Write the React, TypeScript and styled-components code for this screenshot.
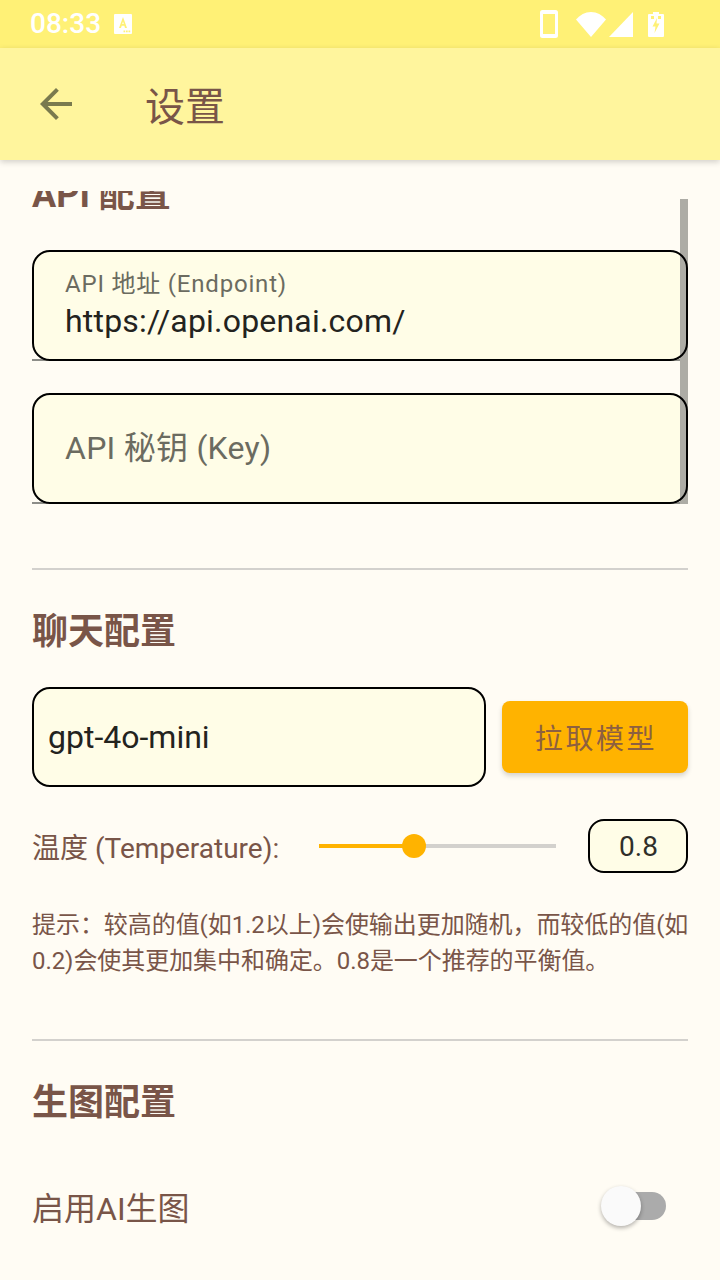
import React from "react";
import styled, { createGlobalStyle } from "styled-components";

const FONT = `Roboto, "Noto Sans CJK SC", sans-serif`;

const Global = createGlobalStyle`
  html, body { margin: 0; padding: 0; }
  body { width: 720px; height: 1280px; overflow: hidden; background: #fffcf4; font-family: ${FONT}; }
`;

const Screen = styled.div`
  width: 720px;
  height: 1280px;
  display: flex;
  flex-direction: column;
  position: relative;
  overflow: hidden;
  background: #fffcf4;
`;

const StatusBar = styled.div`
  height: 48px;
  flex: none;
  background: #fff176;
  display: flex;
  align-items: center;
  padding: 0 56px 0 30px;
  color: #fff;
`;

const Clock = styled.span`
  font-size: 28px;
  font-weight: 500;
  line-height: 48px;
  margin-right: 13px;
`;

const StatusRight = styled.div`
  margin-left: auto;
  display: flex;
  align-items: center;
`;

const StatusSlot = styled.span<{ $ml: number }>`
  display: flex;
  margin-left: ${(p) => p.$ml}px;
`;

const AppBar = styled.header`
  height: 112px;
  flex: none;
  background: #fff59d;
  display: flex;
  align-items: center;
  padding-left: 32px;
  box-shadow: 0 2px 6px rgba(0, 0, 0, 0.18);
  position: relative;
  z-index: 2;
`;

const AppTitle = styled.h1`
  margin: 7px 0 0 65px;
  font-size: 40px;
  font-weight: 400;
  color: #795548;
  line-height: 1;
`;

const Scroll = styled.main`
  flex: 1;
  margin-top: 31px;
  overflow: hidden;
  padding: 0 32px;
  position: relative;
`;

const ScrollThumb = styled.div`
  position: absolute;
  right: 32px;
  top: 8px;
  width: 8px;
  height: 305px;
  background: #adaca5;
  z-index: 1;
`;

const SectionTitle = styled.h2<{ $top: number }>`
  margin: ${(p) => p.$top}px 0 0;
  font-size: 36px;
  line-height: 48px;
  font-weight: 700;
  color: #795548;
`;

const TextField = styled.div<{ $gap: number }>`
  height: 111px;
  margin-top: ${(p) => p.$gap}px;
  box-sizing: border-box;
  position: relative;
  border-bottom: 2px solid #8d8d88;
`;

const FieldFill = styled.div`
  position: absolute;
  inset: 0 0 -2px 0;
  border-radius: 18px;
  background: #fffde7;
`;

const FieldBox = styled.div`
  position: absolute;
  inset: 0 0 -2px 0;
  box-sizing: border-box;
  border: 2px solid #000;
  border-radius: 18px;
  padding: 0 31px;
  display: flex;
  flex-direction: column;
  justify-content: center;
  z-index: 2;
`;

const FloatLabel = styled.span`
  font-size: 24px;
  line-height: 32px;
  color: #6b6b60;
  letter-spacing: 0.8px;
  margin-top: -3px;
  margin-bottom: 1px;
`;

const FieldValue = styled.span`
  font-size: 32px;
  line-height: 40px;
  color: #23231e;
  letter-spacing: 0.2px;
`;

const Placeholder = styled.span`
  font-size: 32px;
  line-height: 40px;
  color: #6b6b60;
  letter-spacing: 0.25px;
  margin-top: -2px;
`;

const Divider = styled.hr<{ $top: number }>`
  border: 0;
  height: 2px;
  background: #d3d1cd;
  margin: ${(p) => p.$top}px 0 0;
`;

const ModelRow = styled.div`
  display: flex;
  align-items: center;
  gap: 16px;
  margin-top: 31px;
`;

const ModelInput = styled.div`
  flex: 1;
  height: 100px;
  box-sizing: border-box;
  border: 2px solid #000;
  border-radius: 18px;
  background: #fffde7;
  display: flex;
  align-items: center;
  padding-left: 14px;
  font-size: 32px;
  color: #23231e;
`;

const FetchButton = styled.button`
  width: 186px;
  height: 72px;
  border: 0;
  border-radius: 8px;
  background: #ffb300;
  color: #8d6040;
  font-family: ${FONT};
  font-size: 28px;
  letter-spacing: 2.6px;
  padding: 0 0 0 2px;
  box-shadow: 0 3px 5px rgba(0, 0, 0, 0.16);
`;

const SliderRow = styled.div`
  display: flex;
  align-items: center;
  margin-top: 32px;
  height: 54px;
`;

const SliderLabel = styled.span`
  font-size: 28px;
  color: #795548;
  width: 287px;
  flex: none;
`;

const Track = styled.div`
  width: 237px;
  height: 4px;
  background: #d3d1cd;
  position: relative;
  flex: none;
`;

const TrackFill = styled.div`
  height: 100%;
  background: #ffb300;
`;

const Thumb = styled.div`
  position: absolute;
  top: -10px;
  width: 24px;
  height: 24px;
  margin-left: -12px;
  border-radius: 50%;
  background: #ffb300;
`;

const ValueBox = styled.div`
  margin-left: auto;
  width: 100px;
  height: 54px;
  box-sizing: border-box;
  border: 2px solid #000;
  border-radius: 16px;
  background: #fffde7;
  display: flex;
  align-items: center;
  justify-content: center;
  padding-left: 1px;
  font-size: 28px;
  color: #2f2f2a;
`;

const Hint = styled.p`
  margin: 34px 0 0;
  font-size: 24px;
  line-height: 36px;
  letter-spacing: -0.06px;
  color: #795548;
  white-space: nowrap;
`;

const SwitchRow = styled.div`
  display: flex;
  align-items: center;
  justify-content: space-between;
  margin-top: 51px;
  height: 56px;
`;

const SwitchLabel = styled.span`
  font-size: 32px;
  color: #795548;
`;

const SwitchTrack = styled.div`
  width: 56px;
  height: 28px;
  border-radius: 14px;
  background: #ababab;
  position: relative;
  margin: 0 22px 0 0;
`;

const SwitchKnob = styled.div`
  position: absolute;
  left: -9px;
  top: -6px;
  width: 40px;
  height: 40px;
  border-radius: 50%;
  background: #fafafa;
  box-shadow: 0 2px 4px rgba(0, 0, 0, 0.3);
`;

const BackArrow = () => (
  <svg width="48" height="48" viewBox="0 0 24 24" aria-hidden="true">
    <path d="M20 11H7.830l5.590-5.590L12 4l-8 8 8 8 1.410-1.410L7.830 13H20v-2z" fill="#7a7a4e" />
  </svg>
);

const NoticeIcon = () => (
  <svg width="18" height="20" viewBox="0 0 18 20" aria-hidden="true">
    <path d="M1 0h16a1 1 0 0 1 1 1v18a1 1 0 0 1-1 1H1a1 1 0 0 1-1-1V1a1 1 0 0 1 1-1z" fill="#fff" />
    <path d="M9 3L5 14h2l.7-2.200h2.600L11 14h2L9 3zm-.8 7L9 7.500 9.800 10H8.200z" fill="#fff176" />
    <path d="M9.500 16.500h1.700v1.700H9.500zM12 16.500h1.700v1.700H12zM14.500 16.500h1.700v1.700h-1.700z" fill="#fff176" />
  </svg>
);

const PhoneIcon = () => (
  <svg width="18" height="28" viewBox="0 0 18 28" aria-hidden="true">
    <path fillRule="evenodd" d="M2.500 0h13A2.500 2.500 0 0 1 18 2.500v23a2.500 2.500 0 0 1-2.500 2.500h-13A2.500 2.500 0 0 1 0 25.500v-23A2.500 2.500 0 0 1 2.500 0zM3 4v20h12V4z" fill="#fff" />
  </svg>
);

const WifiIcon = () => (
  <svg width="30" height="25" viewBox="0 0 30 25" aria-hidden="true">
    <path d="M15 25L0 7.500C4 3 9 0 15 0S26 3 30 7.500z" fill="#fff" />
  </svg>
);

const SignalIcon = () => (
  <svg width="24" height="25" viewBox="0 0 24 25" aria-hidden="true">
    <path d="M24 0v25H0z" fill="#fff" />
  </svg>
);

const BatteryIcon = () => (
  <svg width="16" height="25" viewBox="0 0 16 25" aria-hidden="true">
    <path d="M5 0h6v2h4a1 1 0 0 1 1 1v21a1 1 0 0 1-1 1H1a1 1 0 0 1-1-1V3a1 1 0 0 1 1-1h4z" fill="#fff" />
    <path d="M3 4h3v3H3zM10 4h3v3h-3z" fill="#fff176" />
    <path d="M9 6L4.500 14.500H7.500L6.500 21 11.500 11.500H8.500z" fill="#fff176" />
  </svg>
);

export default function App() {
  return (
    <Screen>
      <Global />
      <StatusBar>
        <Clock>08:33</Clock>
        <NoticeIcon />
        <StatusRight>
          <PhoneIcon />
          <StatusSlot $ml={18}><WifiIcon /></StatusSlot>
          <StatusSlot $ml={3}><SignalIcon /></StatusSlot>
          <StatusSlot $ml={15}><BatteryIcon /></StatusSlot>
        </StatusRight>
      </StatusBar>
      <AppBar>
        <BackArrow />
        <AppTitle>设置</AppTitle>
      </AppBar>
      <Scroll>
        <ScrollThumb />
        <SectionTitle $top={-20}>API 配置</SectionTitle>
        <TextField $gap={31}>
          <FieldFill />
          <FieldBox>
            <FloatLabel>API 地址 (Endpoint)</FloatLabel>
            <FieldValue>https://api.openai.com/</FieldValue>
          </FieldBox>
        </TextField>
        <TextField $gap={32}>
          <FieldFill />
          <FieldBox>
            <Placeholder>API 秘钥 (Key)</Placeholder>
          </FieldBox>
        </TextField>
        <Divider $top={64} />
        <SectionTitle $top={38}>聊天配置</SectionTitle>
        <ModelRow>
          <ModelInput>gpt-4o-mini</ModelInput>
          <FetchButton>拉取模型</FetchButton>
        </ModelRow>
        <SliderRow>
          <SliderLabel>温度 (Temperature):</SliderLabel>
          <Track>
            <TrackFill style={{ width: "40%" }} />
            <Thumb style={{ left: "40%" }} />
          </Track>
          <ValueBox>0.8</ValueBox>
        </SliderRow>
        <Hint>
          提示：较高的值(如1.2以上)会使输出更加随机，而较低的值(如
          <br />
          0.2)会使其更加集中和确定。0.8是一个推荐的平衡值。
        </Hint>
        <Divider $top={60} />
        <SectionTitle $top={38}>生图配置</SectionTitle>
        <SwitchRow>
          <SwitchLabel>启用AI生图</SwitchLabel>
          <SwitchTrack><SwitchKnob /></SwitchTrack>
        </SwitchRow>
      </Scroll>
    </Screen>
  );
}
